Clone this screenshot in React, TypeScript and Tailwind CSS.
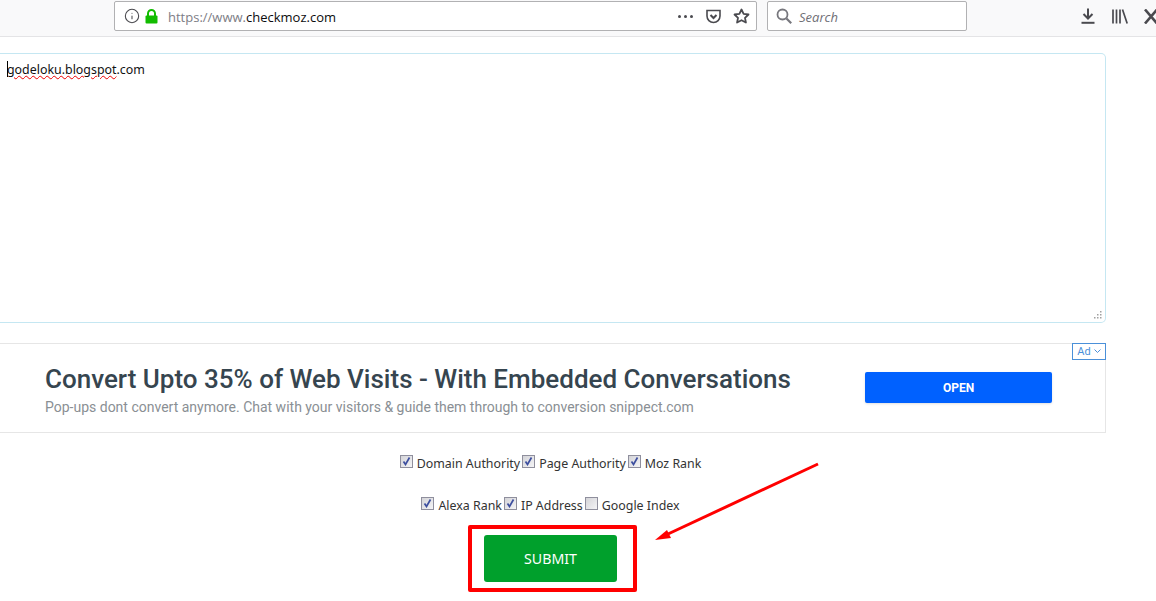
import { Info } from "lucide-react";

const options = [
  [
    { label: "Domain Authority", checked: true },
    { label: "Page Authority", checked: true },
    { label: "Moz Rank", checked: true },
  ],
  [
    { label: "Alexa Rank", checked: true },
    { label: "IP Address", checked: true },
    { label: "Google Index", checked: false },
  ],
];

const CheckBox = ({ checked }: { checked: boolean }) => (
  <span className="w-[13px] h-[13px] border border-[#8f8f9d] bg-gradient-to-br from-[#d4d4d8] to-[#f4f4f6] flex items-center justify-center shrink-0 relative top-[-3px]">
    {checked && (
      <svg width="9" height="9" viewBox="0 0 9 9">
        <path d="M1.5 4.5 L3.5 7.5 L7.5 0.5" fill="none" stroke="#3d4f9f" strokeWidth="1.7" />
      </svg>
    )}
  </span>
);

const Toolbar = () => (
  <div className="h-[37px] bg-[#f9f9fa] border-b border-[#e4e4e6] flex items-start pt-px shrink-0 overflow-hidden">
    <div className="w-[643px] h-[30px] ml-[114px] shrink-0 bg-white border border-[#b1b1b3] rounded-[2px] flex items-center pl-[9px] pr-[6px]">
      <Info size={16} strokeWidth={1.6} className="text-[#4a4a4f]" />
      <svg width="13" height="15" viewBox="0 0 13 15" className="ml-[5px]">
        <path d="M3 7 V4.5 A3.5 3.5 0 0 1 10 4.5 V7" fill="none" stroke="#12bc00" strokeWidth="2" />
        <rect x="0.5" y="6.5" width="12" height="8" rx="1" fill="#12bc00" />
      </svg>
      <span className="ml-[10px] relative top-[2px] text-[13px] text-[#7d7d85] font-['Open_Sans',sans-serif]">
        https://www.<span className="text-[#0c0c0d]">checkmoz.com</span>
      </span>
      <div className="ml-auto flex items-center text-[#4a4a4f]">
        <span className="flex gap-[3px]">
          <span className="w-[3px] h-[3px] rounded-full bg-[#4a4a4f]" />
          <span className="w-[3px] h-[3px] rounded-full bg-[#4a4a4f]" />
          <span className="w-[3px] h-[3px] rounded-full bg-[#4a4a4f]" />
        </span>
        <svg width="17" height="15" viewBox="0 0 16 15" fill="none" stroke="#4a4a4f" strokeWidth="1.6" className="ml-[12px]">
          <path d="M1.5 1.5 H14.5 V7 A6.5 6.5 0 0 1 1.5 7 Z" />
          <path d="M5 6 L8 9 L11 6" strokeWidth="2" />
        </svg>
        <svg width="17" height="16" viewBox="0 0 17 16" fill="none" stroke="#4a4a4f" strokeWidth="1.8" className="ml-[11px]">
          <path d="M8.5 1.5 L10.6 5.9 L15.5 6.5 L12 9.8 L12.9 14.5 L8.5 12.2 L4.1 14.5 L5 9.8 L1.5 6.5 L6.4 5.9 Z" strokeLinejoin="round" />
        </svg>
      </div>
    </div>
    <div className="w-[200px] h-[30px] ml-[10px] shrink-0 bg-white border border-[#b1b1b3] rounded-[2px] flex items-center pl-[8px]">
      <svg width="16" height="16" viewBox="0 0 16 16" fill="none" stroke="#77777d" strokeWidth="1.8">
        <circle cx="6.5" cy="6.5" r="5" />
        <path d="M10.5 10.5 L15.2 15.2" strokeWidth="2.2" />
      </svg>
      <span className="ml-[7px] relative top-[2px] text-[13px] italic text-[#6f6f76] font-['Open_Sans',sans-serif]">Search</span>
    </div>
    <div className="flex items-center h-[30px] ml-[114px] shrink-0">
      <svg width="14" height="16" viewBox="0 0 14 16" fill="none" stroke="#4a4a4f" strokeWidth="2">
        <path d="M7 0.5 V10 M2.5 6 L7 10.5 L11.5 6" />
        <path d="M0.5 14.8 H13.5" />
      </svg>
      <svg width="16" height="15" viewBox="0 0 16 15" fill="none" stroke="#4a4a4f" strokeWidth="1.7" className="ml-[17px]">
        <path d="M1 0.5 V14.5 M4.5 0.5 V14.5 M8 0.5 V14.5 M10.5 0.5 L15.2 14.5" />
      </svg>
      <svg width="14" height="15" viewBox="0 0 14 15" fill="none" stroke="#4a4a4f" strokeWidth="2.6" className="ml-[16px] shrink-0">
        <path d="M1 0.5 L13 14.5 M13 0.5 L1 14.5" />
      </svg>
    </div>
  </div>
);

const AdBlock = () => (
  <div className="relative w-[1106px] h-[90px] mt-[20px] border-y border-r border-[#e6e6e6] flex items-center font-['Roboto',sans-serif]">
    <div className="ml-[45px] relative top-[2px]">
      <div className="text-[26px] leading-[32px] font-medium text-[#36454f] whitespace-nowrap">
        Convert Upto 35% of Web Visits - With Embedded Conversations
      </div>
      <div className="text-[14px] leading-[20px] mt-[2px] text-[#8a8f94] whitespace-nowrap">
        Pop-ups dont convert anymore. Chat with your visitors &amp; guide them through to conversion snippect.com
      </div>
    </div>
    <button className="absolute left-[865px] top-[28px] w-[187px] h-[31px] bg-[#0061ff] rounded-[2px] shadow text-white text-[12px] font-bold">
      OPEN
    </button>
    <div className="absolute right-[-1px] top-[-1px] w-[34px] h-[17px] border border-[#4a90d9] bg-white text-[#4a90d9] text-[11px] leading-[14px] flex items-center justify-center gap-[3px]">
      Ad
      <svg width="7" height="5" viewBox="0 0 7 5" fill="none" stroke="#4a90d9" strokeWidth="1">
        <path d="M0.5 0.5 L3.5 3.5 L6.5 0.5" />
      </svg>
    </div>
  </div>
);

export default function App() {
  return (
    <div className="relative w-[1156px] h-[601px] overflow-hidden bg-white flex flex-col">
      <Toolbar />
      <div className="relative w-[1106px] h-[270px] mt-[16px] border border-l-0 border-[#c5e7f2] rounded-r-[5px] pt-[2px] pl-[7px]">
        <span className="relative text-[12.4px] leading-[18px] text-[#111] font-['Noto_Sans',sans-serif] underline decoration-wavy decoration-[#e00] decoration-1">
          <span className="absolute left-0 top-0 w-px h-[16px] bg-black" />
          godeloku.blogspot<span className="inline-block no-underline">.com</span>
        </span>
        <svg width="9" height="9" viewBox="0 0 9 9" className="absolute right-[2px] bottom-[2px]" fill="#a0a0a0">
          <rect x="6" y="0" width="1.5" height="1.5" />
          <rect x="3" y="3" width="1.5" height="1.5" />
          <rect x="6" y="3" width="1.5" height="1.5" />
          <rect x="0" y="6" width="1.5" height="1.5" />
          <rect x="3" y="6" width="1.5" height="1.5" />
          <rect x="6" y="6" width="1.5" height="1.5" />
        </svg>
      </div>
      <AdBlock />
      <div className="w-[1101px] flex flex-col items-center mt-[22px] font-['Noto_Sans',sans-serif] text-[12.4px] text-[#333]">
        {options.map((row, i) => (
          <div key={i} className="flex items-center h-[18px] mb-[24px] gap-[2px] leading-[18px]">
            {row.map((opt) => (
              <label key={opt.label} className="flex items-center gap-[4px] whitespace-nowrap">
                <CheckBox checked={opt.checked} />
                {opt.label}
              </label>
            ))}
          </div>
        ))}
        <button className="w-[133px] h-[47px] -mt-[4px] bg-[#00a02c] rounded-[3px] text-white text-[14.2px]">
          SUBMIT
        </button>
      </div>

      {/* red annotations on top of the page */}
      <div className="absolute left-[468px] top-[525px] w-[169px] h-[67px] border-[4px] border-[#ff0000] rounded-[2px]" />
      <svg className="absolute left-[650px] top-[455px]" width="175" height="90" viewBox="0 0 175 90">
        <path d="M168 9 L18 79" stroke="#ff0000" strokeWidth="3" fill="none" />
        <path d="M5 85 L17 75 L21 83 Z" fill="#ff0000" />
      </svg>
    </div>
  );
}
